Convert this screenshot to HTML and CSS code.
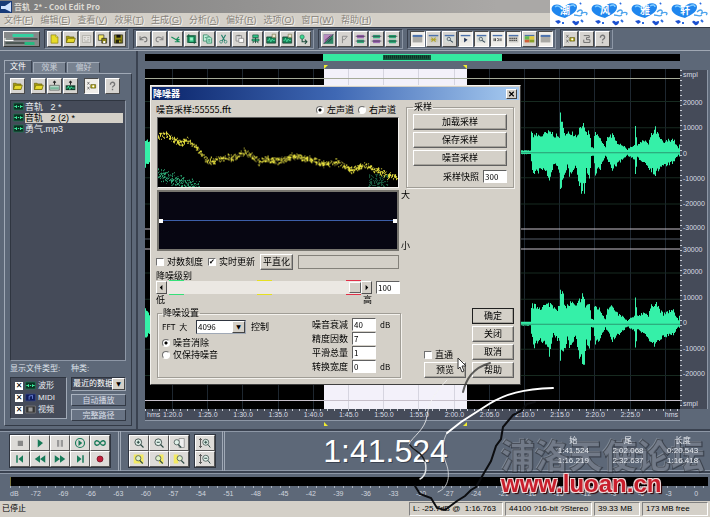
FILE: index.html
```html
<!DOCTYPE html>
<html lang="zh-CN">
<head>
    <meta charset="UTF-8">
    <meta name="viewport" content="width=device-width, initial-scale=1.0">
    <title>音轨 2* - Cool Edit Pro</title>
    <link rel="stylesheet" href="styles.css">
</head>
<body>
    <!-- 图标 -->
    <svg class="icon-defs" aria-hidden="true">
        <symbol id="i-new" viewBox="0 0 16 16"><path d="M3 2h7l3 3v9H3z" fill="#e8dc28" stroke="#8a8210"/><path d="M10 2v3h3" fill="#fff" stroke="#8a8210"/></symbol>
        <symbol id="i-open" viewBox="0 0 16 16"><path d="M2 13V4h4l1 1h6v8z" fill="#a89c10" stroke="#6b6408"/><path d="M2 13l2-6h11l-2 6z" fill="#e6d92c" stroke="#6b6408"/></symbol>
        <symbol id="i-doc" viewBox="0 0 16 16"><path d="M2 3h12v10H2z" fill="#e4e2de" stroke="#a5a39e"/><path d="M4 6h3m2 0h3M4 9h2m3 0h3M5 11h6" stroke="#a5a39e"/></symbol>
        <symbol id="i-saveas" viewBox="0 0 16 16"><path d="M2 2h8v8H2z" fill="#f4e860" stroke="#333"/><path d="M7 7h7v7H7z" fill="#8d8612" stroke="#222"/><path d="M9 11h3v3H9z" fill="#fff"/></symbol>
        <symbol id="i-save" viewBox="0 0 16 16"><path d="M2 2h12v12H2z" fill="#8d8612" stroke="#222"/><path d="M5 2h6v4H5z" fill="#111"/><path d="M4 9h8v5H4z" fill="#26250c"/><path d="M9 10h2v3H9z" fill="#e6d92c"/></symbol>
        <symbol id="i-undo" viewBox="0 0 16 16"><path d="M3 4v5h5M3 9c3-5 10-5 10 0 0 2-2 3-4 3" fill="none" stroke="#777" stroke-width="1.5"/></symbol>
        <symbol id="i-redo" viewBox="0 0 16 16"><path d="M13 4v5H8M13 9C10 4 3 4 3 9c0 2 2 3 4 3" fill="none" stroke="#888" stroke-width="1.5"/></symbol>
        <symbol id="i-split" viewBox="0 0 16 16"><path d="M2 5l7 4h5M13 5L9 9l4 3H7" fill="none" stroke="#178c5a" stroke-width="1.7"/></symbol>
        <symbol id="i-crop" viewBox="0 0 16 16"><path d="M2 3h12v10H2z" fill="#38c486" stroke="#17513a"/><path d="M4 1v12h11M1 4h11v11" fill="none" stroke="#0c5a3a" stroke-width="1.4"/><path d="M6 6h4v4H6z" fill="#9ff0ca"/></symbol>
        <symbol id="i-copy" viewBox="0 0 16 16"><path d="M2 2h6l2 2v7H2z" fill="#c6f0dc" stroke="#1a7a54"/><path d="M7 5h5l2 2v7H7z" fill="#b0e8d0" stroke="#1a7a54"/><path d="M9 9h3M9 11h3M4 6h2" stroke="#1a7a54"/></symbol>
        <symbol id="i-cut" viewBox="0 0 16 16"><path d="M5 2l5 9M11 2L6 11" stroke="#24806a" stroke-width="1.5"/><circle cx="4.500" cy="12" r="2" fill="none" stroke="#24806a"/><circle cx="11" cy="12" r="2" fill="none" stroke="#24806a"/></symbol>
        <symbol id="i-paste" viewBox="0 0 16 16"><path d="M3 3h8v8H3z" fill="#ddd" stroke="#777"/><path d="M7 7h7v6H7z" fill="#fff" stroke="#777"/><path d="M5 2h4v2H5z" fill="#777"/></symbol>
        <symbol id="i-mix" viewBox="0 0 16 16"><path d="M4 2h8v4H4zM3 8h10v3H3z" fill="#2fc485" stroke="#16513a"/><path d="M8 6v8M4 14l2-3m6 3l-2-3" stroke="#16513a" stroke-width="1.300"/></symbol>
        <symbol id="i-wavedoc" viewBox="0 0 16 16"><path d="M1 5h13v9H1z" fill="#158055" stroke="#14382a"/><path d="M2 10h2l1-3 2 5 2-4 1 2h3" fill="none" stroke="#59f0b0"/><path d="M9 1h5v5H9z" fill="#e8e4d0" stroke="#7e7a50"/></symbol>
        <symbol id="i-convert" viewBox="0 0 16 16"><circle cx="6" cy="5" r="3" fill="#3cd890" stroke="#177650"/><path d="M6 8v4h7m-3-3l3 3-3 3" fill="none" stroke="#1b4a3a" stroke-width="1.500"/></symbol>
        <symbol id="i-diag" viewBox="0 0 16 16"><path d="M1 1h14v14H1z" fill="#2d8765"/><path d="M1 1h14L1 15z" fill="#b98abf"/><path d="M1 15L15 1M3 10l8-7M7 13l6-6" stroke="#2b1c38"/></symbol>
        <symbol id="i-flag" viewBox="0 0 16 16"><path d="M5 14V4h7L8 9H5" fill="none" stroke="#888" stroke-width="1.300"/></symbol>
        <symbol id="i-bars-a" viewBox="0 0 16 16"><path d="M3 2h10v5H3z" fill="#9c68b0"/><path d="M3 9h10v5H3z" fill="#30a878"/><path d="M1 4h14M1 11h14" stroke="#322844"/></symbol>
        <symbol id="i-bars-b" viewBox="0 0 16 16"><path d="M3 2h10v5H3z" fill="#30a878"/><path d="M3 9h10v5H3z" fill="#9c68b0"/><path d="M1 4h14M1 11h14" stroke="#322844"/></symbol>
        <symbol id="i-bars-c" viewBox="0 0 16 16"><path d="M3 2h10v5H3zM3 9h10v5H3z" fill="#30a878"/><path d="M1 4h14M1 11h14" stroke="#14382a"/></symbol>
        <symbol id="i-win" viewBox="0 0 16 16"><path d="M1 3h14v10H1z" fill="#a9a9a5"/><path d="M1 2h14v3H1z" fill="#4b72ae"/></symbol>
        <symbol id="i-win-play" viewBox="0 0 16 16"><path d="M1 3h14v10H1z" fill="#e8e8e4"/><path d="M1 2h14v2H1z" fill="#4b72ae"/><path d="M6 6l5 3-5 4z" fill="#235"/></symbol>
        <symbol id="i-win-gear" viewBox="0 0 16 16"><path d="M1 3h14v10H1z" fill="#c9c9c0"/><path d="M1 2h14v2H1z" fill="#4b72ae"/><path d="M5 6l6 6M11 6l-6 6M4 9h8" stroke="#b0a428" stroke-width="1.500"/></symbol>
        <symbol id="i-win-zoom" viewBox="0 0 16 16"><path d="M1 3h14v10H1z" fill="#d5dcd8"/><path d="M1 2h14v2H1z" fill="#4b72ae"/><circle cx="7" cy="8" r="2.500" fill="none" stroke="#345"/><path d="M9 10l4 3" stroke="#345" stroke-width="1.500"/></symbol>
        <symbol id="i-win-time" viewBox="0 0 16 16"><path d="M1 3h14v10H1z" fill="#e8e8e4"/><path d="M1 2h14v2H1z" fill="#4b72ae"/><path d="M3 7v4m2-4v4M8 7v1m0 2v1m2-4v4m3-4v4" stroke="#222" stroke-width="1.200"/></symbol>
        <symbol id="i-win-level" viewBox="0 0 16 16"><path d="M1 3h14v10H1z" fill="#c9c9c5"/><path d="M1 2h14v2H1z" fill="#4b72ae"/><path d="M2 7h12M2 10h12" stroke="#444" stroke-width="2" stroke-dasharray="2 1"/></symbol>
        <symbol id="i-win-color" viewBox="0 0 16 16"><path d="M1 2h14v2H1z" fill="#4b72ae"/><path d="M1 4h7v5H1z" fill="#63b84e"/><path d="M8 4h7v5H8z" fill="#e0c93c"/><path d="M1 9h7v4H1z" fill="#d06038"/><path d="M8 9h7v4H8z" fill="#88a028"/></symbol>
        <symbol id="i-props" viewBox="0 0 16 16"><path d="M2 2l3 4M5 2L2 6M2 9l3 4M5 9l-3 4" stroke="#555"/><path d="M7 6h7v5H7z" fill="#b8ae20" stroke="#5c5610"/><circle cx="10.500" cy="8.500" r="1.500" fill="#fff"/></symbol>
        <symbol id="i-script" viewBox="0 0 16 16"><path d="M4 3h8v3H8v3h5v4H4V9" fill="none" stroke="#666" stroke-width="1.300"/></symbol>
        <symbol id="i-help" viewBox="0 0 16 16"><path d="M5 6c0-5 7-4 6 0 0 2-3 2-3 4m0 2v2" fill="none" stroke="#777" stroke-width="2"/></symbol>
        <symbol id="i-import" viewBox="0 0 16 16"><path d="M1 7h14v7H1z" fill="#b5d8c8" stroke="#555"/><path d="M8 1v5M6 3l2-2 2 2" fill="none" stroke="#222" stroke-width="1.500"/><path d="M2 11h12" stroke="#178c5a"/></symbol>
        <symbol id="i-insert" viewBox="0 0 16 16"><path d="M1 7h14v7H1z" fill="#133c2c"/><path d="M8 1v5M6 3l2-2 2 2" fill="none" stroke="#222" stroke-width="1.500"/><path d="M2 11h2l1-3 2 5 2-4 1 2h4" fill="none" stroke="#36e89a" stroke-width="1.300"/></symbol>
        <symbol id="i-wave" viewBox="0 0 16 12"><path d="M1 1h14v10H1z" fill="#0b3021" stroke="#1f7a55"/><path d="M2 6h3V4v4m2-2h2m2 0V4v4m0-2h3" fill="none" stroke="#3cf0a0" stroke-width="1.500"/></symbol>
        <symbol id="i-midi" viewBox="0 0 16 12"><path d="M1 1h14v10H1z" fill="#0f1c5c" stroke="#3a4a88"/><path d="M6 9V4l5-1v5" fill="none" stroke="#8aa6ff"/></symbol>
        <symbol id="i-video" viewBox="0 0 16 12"><path d="M1 1h14v10H1z" fill="#333" stroke="#888"/><path d="M5 3h6v6H5z" fill="#999"/></symbol>
        <symbol id="i-stop" viewBox="0 0 16 16"><path d="M5 5h7v7H5z" fill="#888"/></symbol>
        <symbol id="i-play" viewBox="0 0 16 16"><path d="M5 3l7 5-7 6z" fill="#177a58"/></symbol>
        <symbol id="i-pause" viewBox="0 0 16 16"><path d="M4 4h3v9H4zM9 4h3v9H9z" fill="#999"/></symbol>
        <symbol id="i-playcircle" viewBox="0 0 16 16"><circle cx="8" cy="8" r="6" fill="none" stroke="#177a58" stroke-width="1.500"/><path d="M6 4l5 4-5 4z" fill="#177a58"/></symbol>
        <symbol id="i-loop" viewBox="0 0 16 16"><path d="M8 8C5 3 1 5 1 8s4 5 7 0 7-3 7 0-4 5-7 0z" fill="none" stroke="#177a58" stroke-width="1.800"/></symbol>
        <symbol id="i-start" viewBox="0 0 16 16"><path d="M3 3h2v10H3zM12 3v10L6 8z" fill="#177a58"/></symbol>
        <symbol id="i-rew" viewBox="0 0 16 16"><path d="M8 3v10L1 8zM15 3v10L8 8z" fill="#177a58"/></symbol>
        <symbol id="i-fwd" viewBox="0 0 16 16"><path d="M1 3v10l7-5zM8 3v10l7-5z" fill="#177a58"/></symbol>
        <symbol id="i-end" viewBox="0 0 16 16"><path d="M11 3h2v10h-2zM4 3v10l6-5z" fill="#177a58"/></symbol>
        <symbol id="i-rec" viewBox="0 0 16 16"><circle cx="8" cy="8" r="4" fill="#c01c38" stroke="#701020"/></symbol>
        <symbol id="i-zin" viewBox="0 0 16 16"><circle cx="7" cy="7" r="4.500" fill="#dff0e8" stroke="#3c4c4a" stroke-width="1.200"/><path d="M5 7h4M7 5v4M10 10l4 4" stroke="#2c4a44" stroke-width="1.500"/></symbol>
        <symbol id="i-zout" viewBox="0 0 16 16"><circle cx="7" cy="7" r="4.500" fill="#dff0e8" stroke="#3c4c4a" stroke-width="1.200"/><path d="M5 7h4M10 10l4 4" stroke="#2c4a44" stroke-width="1.500"/></symbol>
        <symbol id="i-zfull" viewBox="0 0 16 16"><path d="M8 2h7v12H8z" fill="#eee" stroke="#888"/><circle cx="5" cy="7" r="3.500" fill="#dff0e8" stroke="#3c4c4a"/><path d="M7 10l4 4" stroke="#2c4a44" stroke-width="1.500"/></symbol>
        <symbol id="i-zsel" viewBox="0 0 16 16"><path d="M1 2h13v12H1z" fill="#f2ea62"/><circle cx="7" cy="7" r="3.500" fill="#dff0c8" stroke="#3c4c4a"/><path d="M9 10l4 4" stroke="#2c4a44" stroke-width="1.500"/></symbol>
        <symbol id="i-zleft" viewBox="0 0 16 16"><path d="M8 2h6v12H8z" fill="#f2ea62"/><circle cx="7" cy="7" r="3.500" fill="#dff0c8" stroke="#3c4c4a"/><path d="M9 10l4 4" stroke="#2c4a44" stroke-width="1.500"/></symbol>
        <symbol id="i-zright" viewBox="0 0 16 16"><path d="M1 2h6v12H1z" fill="#f2ea62"/><circle cx="9" cy="7" r="3.500" fill="#dff0c8" stroke="#3c4c4a"/><path d="M11 10l4 4" stroke="#2c4a44" stroke-width="1.500"/></symbol>
        <symbol id="i-vin" viewBox="0 0 16 16"><path d="M2 2v12M0 4l2-2 2 2M0 12l2 2 2-2" fill="none" stroke="#333"/><circle cx="9" cy="7" r="4" fill="#dff0e8" stroke="#3c4c4a"/><path d="M7 7h4M9 5v4M12 10l3 4" stroke="#2c4a44" stroke-width="1.300"/></symbol>
        <symbol id="i-vout" viewBox="0 0 16 16"><path d="M2 2v12M0 4l2-2 2 2M0 12l2 2 2-2" fill="none" stroke="#333"/><circle cx="9" cy="7" r="4" fill="#dff0e8" stroke="#3c4c4a"/><path d="M7 7h4M12 10l3 4" stroke="#2c4a44" stroke-width="1.300"/></symbol>
        <symbol id="i-heart" viewBox="0 0 40 26">
            <path d="M15 18C5 16 0 11 2 7c2-4 9-3 12 1 3-6 13-6 13-1 0 5-6 8-12 11z" fill="#1f86ee"/>
            <path d="M5 7c2-2 4-1 6 1M20 6c3-2 5-1 5 1" fill="none" stroke="#7fcbff" stroke-width="1.500"/>
            <path d="M27 12c4-4 7-1 4 2 4-3 8-1 5 1M24 15c3 0 5 2 8 0" fill="none" stroke="#4ba2ec" stroke-width="1.300"/>
            <path d="M5 21l3 3 3-2-2-2zM22 22c2-3 4 0 4 0s3-2 3 0-3 4-4 3z" fill="#1b50d0"/>
            <path d="M12 23h2M31 20l2 2M30 4l1-1" stroke="#2c6ce0" stroke-width="2"/>
        </symbol>
    </svg>

    <header class="title-bar">
        <svg class="app-icon" viewBox="0 0 12 12"><path d="M0 0h12v12H0z" fill="#173a78"/><path d="M1 5h4l6-4v10L5 8H1z" fill="#cfe2ff"/></svg>
        <h1>音轨&nbsp; 2* - Cool Edit Pro</h1>
    </header>

    <nav class="menu-bar">
        <a href="#">文件(<u>F</u>)</a>
        <a href="#">编辑(<u>E</u>)</a>
        <a href="#">查看(<u>V</u>)</a>
        <a href="#">效果(<u>T</u>)</a>
        <a href="#">生成(<u>G</u>)</a>
        <a href="#">分析(<u>A</u>)</a>
        <a href="#">偏好(<u>R</u>)</a>
        <a href="#">选项(<u>O</u>)</a>
        <a href="#">窗口(<u>W</u>)</a>
        <a href="#">帮助(<u>H</u>)</a>
    </nav>

    <div class="banner">
        <span class="heart"><svg><use href="#i-heart"/></svg><b>潮</b></span>
        <span class="heart"><svg><use href="#i-heart"/></svg><b>风</b></span>
        <span class="heart"><svg><use href="#i-heart"/></svg><b>雅</b></span>
        <span class="heart"><svg><use href="#i-heart"/></svg><b>轩</b></span>
    </div>

    <div class="toolbar">
        <button class="view-switch" aria-label="切换视图">
            <svg viewBox="0 0 34 14"><path d="M0 0h34v14H0z" fill="#85898a"/><path d="M8 2h21v3H8z" fill="#35d0a0"/><path d="M0 6h9v3H0z" fill="#fff"/><path d="M20 10h10v3H20z" fill="#27b980"/><path d="M1 7h32M1 11h19" stroke="#14261f"/></svg>
        </button>
        <div class="tool-group">
            <button class="tool" aria-label="新建"><svg><use href="#i-new"/></svg></button>
            <button class="tool" aria-label="打开"><svg><use href="#i-open"/></svg></button>
            <button class="tool" aria-label="文档"><svg><use href="#i-doc"/></svg></button>
            <button class="tool" aria-label="另存为"><svg><use href="#i-saveas"/></svg></button>
            <button class="tool" aria-label="保存"><svg><use href="#i-save"/></svg></button>
        </div>
        <div class="tool-group">
            <button class="tool" aria-label="撤销"><svg><use href="#i-undo"/></svg></button>
            <button class="tool" aria-label="重做"><svg><use href="#i-redo"/></svg></button>
            <button class="tool" aria-label="分割"><svg><use href="#i-split"/></svg></button>
            <button class="tool" aria-label="裁剪"><svg><use href="#i-crop"/></svg></button>
            <button class="tool" aria-label="复制"><svg><use href="#i-copy"/></svg></button>
            <button class="tool" aria-label="剪切"><svg><use href="#i-cut"/></svg></button>
            <button class="tool" aria-label="粘贴"><svg><use href="#i-paste"/></svg></button>
            <button class="tool" aria-label="混合粘贴"><svg><use href="#i-mix"/></svg></button>
            <button class="tool" aria-label="复制到新文件"><svg><use href="#i-wavedoc"/></svg></button>
            <button class="tool" aria-label="插入多轨"><svg><use href="#i-wavedoc"/></svg></button>
            <button class="tool" aria-label="转换"><svg><use href="#i-convert"/></svg></button>
        </div>
        <div class="tool-group">
            <button class="tool" aria-label="频谱"><svg><use href="#i-diag"/></svg></button>
            <button class="tool" aria-label="标记"><svg><use href="#i-flag"/></svg></button>
            <button class="tool" aria-label="左声道"><svg><use href="#i-bars-a"/></svg></button>
            <button class="tool" aria-label="右声道"><svg><use href="#i-bars-b"/></svg></button>
            <button class="tool" aria-label="双声道"><svg><use href="#i-bars-c"/></svg></button>
        </div>
        <div class="tool-group">
            <button class="tool pressed" aria-label="管理器"><svg><use href="#i-win"/></svg></button>
            <button class="tool" aria-label="提示列表"><svg><use href="#i-win-gear"/></svg></button>
            <button class="tool" aria-label="播放列表"><svg><use href="#i-win-zoom"/></svg></button>
            <button class="tool pressed" aria-label="播放控制"><svg><use href="#i-win-play"/></svg></button>
            <button class="tool pressed" aria-label="缩放控制"><svg><use href="#i-win-zoom"/></svg></button>
            <button class="tool pressed" aria-label="时间窗"><svg><use href="#i-win-time"/></svg></button>
            <button class="tool pressed" aria-label="电平表"><svg><use href="#i-win-level"/></svg></button>
            <button class="tool" aria-label="分析"><svg><use href="#i-win-color"/></svg></button>
            <button class="tool pressed" aria-label="状态栏"><svg><use href="#i-win"/></svg></button>
        </div>
        <div class="tool-group">
            <button class="tool" aria-label="设置"><svg><use href="#i-props"/></svg></button>
            <button class="tool" aria-label="脚本"><svg><use href="#i-script"/></svg></button>
            <button class="tool" aria-label="帮助"><svg><use href="#i-help"/></svg></button>
        </div>
    </div>

    <main class="workspace">
        <aside class="organizer">
            <div class="tabs">
                <button class="tab active">文件</button>
                <button class="tab">效果</button>
                <button class="tab">偏好</button>
            </div>
            <div class="tab-page">
                <div class="file-tools">
                    <button class="tool" aria-label="打开文件"><svg><use href="#i-open"/></svg></button>
                    <button class="tool gap" aria-label="关闭文件"><svg><use href="#i-open"/></svg></button>
                    <button class="tool" aria-label="导入"><svg><use href="#i-import"/></svg></button>
                    <button class="tool" aria-label="插入"><svg><use href="#i-insert"/></svg></button>
                    <button class="tool gap pressed" aria-label="选项"><svg><use href="#i-props"/></svg></button>
                    <button class="tool gap" aria-label="帮助"><svg><use href="#i-help"/></svg></button>
                </div>
                <ul class="file-list">
                    <li><svg><use href="#i-wave"/></svg>音轨&nbsp;&nbsp; 2 *</li>
                    <li class="selected"><svg><use href="#i-wave"/></svg><span>音轨&nbsp;&nbsp; 2 (2) *</span></li>
                    <li><svg><use href="#i-wave"/></svg>勇气.mp3</li>
                </ul>
                <div class="file-filter">
                    <div class="filter-types">
                        <div class="filter-label">显示文件类型:</div>
                        <div class="type-box">
                            <label><input type="checkbox" class="x-check" checked><svg><use href="#i-wave"/></svg>波形</label>
                            <label><input type="checkbox" class="x-check" checked><svg><use href="#i-midi"/></svg>MIDI</label>
                            <label><input type="checkbox" class="x-check" checked><svg><use href="#i-video"/></svg>视频</label>
                        </div>
                    </div>
                    <div class="filter-sort">
                        <label class="filter-label" for="sort">种类:</label>
                        <div class="select-wrap">
                            <select id="sort"><option>最近的数据</option></select>
                        </div>
                        <button class="flat-btn">自动播放</button>
                        <button class="flat-btn">完整路径</button>
                    </div>
                </div>
            </div>
        </aside>

        <section class="editor">
            <div class="tracks">
                <svg class="overview" viewBox="0 0 535 7" preserveAspectRatio="none">
                    <path d="M178 0h179v7H178z" fill="#35e8a0"/>
                    <path d="M238 1h48v5h-48z" fill="#15553c"/>
                    <path d="M239 3h46" stroke="#0c3023" stroke-dasharray="1 1" stroke-width="3"/>
                </svg>
                <svg class="markers" viewBox="0 0 535 8" preserveAspectRatio="none"><path d="M179 4h4l-4 4zM322 4h-4l4 4z" fill="#f0ec30"/></svg>
                <svg class="waves" id="waves" viewBox="0 0 535 339" preserveAspectRatio="none"></svg>
                <div class="time-ruler">
                    <span class="unit">hms</span>
                    <span>1:20.0</span><span>1:25.0</span><span>1:30.0</span><span>1:35.0</span><span>1:40.0</span><span>1:45.0</span><span>1:50.0</span><span>1:55.0</span><span>2:00.0</span><span>2:05.0</span><span>2:10.0</span><span>2:15.0</span><span>2:20.0</span><span>2:25.0</span>
                    <span class="unit end">hms</span>
                </div>
                <svg class="markers" viewBox="0 0 535 8" preserveAspectRatio="none"><path d="M179 1v4h4zM322 1v4h-4z" fill="#f0ec30"/></svg>
            </div>
            <div class="level-scale">
                <div class="scale-block top">
                    <span>smpl</span><span>20000</span><span>10000</span><span>0</span><span>-10000</span><span>-20000</span><span>-30000</span>
                </div>
                <div class="scale-block bottom">
                    <span>30000</span><span>20000</span><span>10000</span><span>0</span><span>-10000</span><span>-20000</span><span>smpl</span>
                </div>
            </div>
        </section>
    </main>

    <div class="control-bar">
        <div class="pad transport">
            <button aria-label="停止"><svg><use href="#i-stop"/></svg></button>
            <button aria-label="播放"><svg><use href="#i-play"/></svg></button>
            <button aria-label="暂停"><svg><use href="#i-pause"/></svg></button>
            <button aria-label="播放到结尾"><svg><use href="#i-playcircle"/></svg></button>
            <button aria-label="循环"><svg><use href="#i-loop"/></svg></button>
            <button aria-label="开头"><svg><use href="#i-start"/></svg></button>
            <button aria-label="后退"><svg><use href="#i-rew"/></svg></button>
            <button aria-label="前进"><svg><use href="#i-fwd"/></svg></button>
            <button aria-label="结尾"><svg><use href="#i-end"/></svg></button>
            <button aria-label="录音"><svg><use href="#i-rec"/></svg></button>
        </div>
        <div class="zoom-pads">
            <div class="pad zoom-h">
                <button aria-label="放大"><svg><use href="#i-zin"/></svg></button>
                <button aria-label="缩小"><svg><use href="#i-zout"/></svg></button>
                <button aria-label="全部"><svg><use href="#i-zfull"/></svg></button>
                <button aria-label="放大选区"><svg><use href="#i-zsel"/></svg></button>
                <button aria-label="选区左侧"><svg><use href="#i-zleft"/></svg></button>
                <button aria-label="选区右侧"><svg><use href="#i-zright"/></svg></button>
            </div>
            <div class="pad zoom-v">
                <button aria-label="垂直放大"><svg><use href="#i-vin"/></svg></button>
                <button aria-label="垂直缩小"><svg><use href="#i-vout"/></svg></button>
            </div>
        </div>
        <div class="clock">1:41.524</div>
        <table class="range">
            <tr><th>始</th><th>尾</th><th>长度</th></tr>
            <tr><td>1:41.524</td><td>2:02.068</td><td>0:20.543</td></tr>
            <tr><td>1:16.219</td><td>2:32.637</td><td>1:16.418</td></tr>
        </table>
    </div>

    <div class="meter">
        <div class="meter-bar"></div>
        <div class="meter-scale">
            <span class="unit">dB</span>
            <span>-72</span><span>-69</span><span>-66</span><span>-63</span><span>-60</span><span>-57</span><span>-54</span><span>-51</span><span>-48</span><span>-45</span><span>-42</span><span>-39</span><span>-36</span><span>-33</span><span>-30</span><span>-27</span><span>-24</span><span>-21</span><span>-18</span><span>-15</span><span>-12</span><span>-9</span><span>-6</span><span>-3</span><span>0</span>
        </div>
    </div>

    <footer class="status-bar">
        <span class="state">已停止</span>
        <span class="cell level">L: -25.7dB @&nbsp; 1:16.763</span>
        <span class="cell format">44100 ?16-bit ?Stereo</span>
        <span class="cell size">39.33 MB</span>
        <span class="cell free">173 MB free</span>
    </footer>

    <!-- 降噪器 -->
    <div class="dialog" role="dialog" aria-labelledby="dialogTitle">
        <div class="dialog-title">
            <h2 id="dialogTitle">降噪器</h2>
            <button class="close" aria-label="关闭窗口"><svg viewBox="0 0 8 8"><path d="M1 1l6 6M7 1L1 7" stroke="#000" stroke-width="1.500"/></svg></button>
        </div>
        <div class="dialog-body">
            <div class="dialog-left">
                <div class="profile-row">
                    <span>噪音采样:55555.fft</span>
                    <label><input type="radio" name="channel" checked>左声道</label>
                    <label><input type="radio" name="channel">右声道</label>
                </div>
                <div class="graph-row">
                    <div class="graphs">
                        <canvas id="noise" class="noise-graph" width="241" height="70"></canvas>
                        <div class="curve-graph"><i></i><i></i></div>
                    </div>
                    <div class="graph-labels"><span>大</span><span>小</span></div>
                </div>
                <div class="option-row">
                    <label><input type="checkbox">对数刻度</label>
                    <label><input type="checkbox" checked>实时更新</label>
                    <button class="btn">平直化</button>
                    <div class="readout"></div>
                </div>
                <label class="level-label" for="level">降噪级别</label>
                <div class="slider-row">
                    <div class="slider">
                        <button class="arrow" aria-label="减小"><svg viewBox="0 0 8 8"><path d="M5 1v6L2 4z"/></svg></button>
                        <input type="range" id="level" min="0" max="100" value="100">
                        <button class="arrow" aria-label="增大"><svg viewBox="0 0 8 8"><path d="M3 1v6l3-3z"/></svg></button>
                    </div>
                    <input type="text" class="level-value" value="100" aria-label="降噪级别数值">
                </div>
                <div class="slider-ends"><span>低</span><span>高</span></div>
                <fieldset class="settings">
                    <legend>降噪设置</legend>
                    <div class="mode">
                        <div class="fft-row">
                            <label for="fft">FFT&nbsp; 大</label>
                            <div class="select-wrap light"><select id="fft"><option>4096</option></select></div>
                            <span>控制</span>
                        </div>
                        <label><input type="radio" name="mode" checked>噪音消除</label>
                        <label><input type="radio" name="mode">仅保持噪音</label>
                    </div>
                    <div class="params">
                        <label for="p1">噪音衰减</label><input type="text" id="p1" value="40"><span>dB</span>
                        <label for="p2">精度因数</label><input type="text" id="p2" value="7"><span></span>
                        <label for="p3">平滑总量</label><input type="text" id="p3" value="1"><span></span>
                        <label for="p4">转换宽度</label><input type="text" id="p4" value="0"><span>dB</span>
                    </div>
                </fieldset>
            </div>
            <div class="dialog-right">
                <fieldset class="samples">
                    <legend>采样</legend>
                    <button class="btn">加载采样</button>
                    <button class="btn">保存采样</button>
                    <button class="btn">噪音采样</button>
                    <div class="snap-row"><label for="snap">采样快照</label><input type="text" id="snap" value="300"></div>
                </fieldset>
                <div class="actions">
                    <div class="preview">
                        <label><input type="checkbox">直通</label>
                        <button class="btn">预览</button>
                    </div>
                    <div class="answers">
                        <button class="btn default">确定</button>
                        <button class="btn">关闭</button>
                        <button class="btn">取消</button>
                        <button class="btn">帮助</button>
                    </div>
                </div>
            </div>
        </div>
    </div>

    <!-- 论坛水印 -->
    <svg class="ribbon" viewBox="0 0 180 170" aria-hidden="true">
        <g fill="none" stroke-linecap="round">
            <path d="M85 13C67 18 61 30 58 42" stroke="#3a3a38" stroke-width="2" opacity=".8"/>
            <path d="M42 30C28 45 24 52 22 66S8 86 4 94" stroke="#f4f4f4" opacity=".8"/>
            <path d="M42 83c-5 8-5 20-1 30s4 24-8 29" stroke="#e0e2e4" opacity=".8"/>
            <path d="M148 38C118 39 100 44 84 54L56 72 42 83" stroke="#fff" stroke-width="2"/>
            <path d="M5 95c4 7 12 6 15 17" stroke="#181818" stroke-width="1.500"/>
            <path d="M20 112s4 12-5 17" stroke="#e0e2e4" stroke-width="1.500"/>
            <path d="M130 52l-8 2-6 7-8 4-10 12-2 12-5 7-5 15-7 12-8 14-5 3-6 6-8 5-12 9-8-2-6-10-11-4-5-8" stroke="#0c0d10" stroke-width="2"/>
        </g>
    </svg>
    <div class="watermark">
        <div class="watermark-name">浦洛天使论坛</div>
        <div class="watermark-url">www.luoan.cn</div>
    </div>
    <svg class="cursor" viewBox="0 0 10 16" aria-hidden="true"><path d="M1 1v11l2-2 2 5 2-1-2-5h4z" fill="#fff" stroke="#333"/></svg>

    <script src="script.js"></script>
</body>
</html>
```
FILE: styles.css
```css
* {
    margin: 0;
    padding: 0;
    box-sizing: border-box;
}

body {
    position: relative;
    height: 100vh;
    display: flex;
    flex-direction: column;
    overflow: hidden;
    background: #5d6878;
    color: #000;
    font-family: "Liberation Sans", "Noto Sans CJK SC", sans-serif;
    font-size: 8px;
    line-height: 10px;
}

button, input, select {
    font: inherit;
    color: inherit;
    border-radius: 0;
}

button svg {
    display: block;
    width: 100%;
    height: 100%;
}

.icon-defs {
    position: absolute;
    width: 0;
    height: 0;
}

/* 标题与菜单 */
.title-bar {
    height: 13px;
    display: flex;
    align-items: center;
    gap: 2px;
    background: linear-gradient(90deg, #7c7c7c, #aaa8a6 70%);
}

.app-icon {
    width: 12px;
    height: 12px;
}

.title-bar h1 {
    font-family: "Noto Sans CJK SC", sans-serif;
    font-size: 8px;
    line-height: 12px;
    color: #dedbd4;
}

.menu-bar {
    height: 14px;
    padding-left: 4px;
    display: flex;
    align-items: center;
    gap: 7px;
    background: #d4d0c8;
}

.menu-bar a {
    min-width: 28px;
    font-size: 9px;
    color: #86827a;
    text-decoration: none;
    text-shadow: 1px 1px #f4f2ee;
    white-space: nowrap;
}

.banner {
    position: absolute;
    top: 0;
    right: 0;
    width: 160px;
    height: 27px;
    display: flex;
    background: #fff;
}

.heart {
    position: relative;
    flex: 1;
}

.heart svg {
    width: 100%;
    height: 26px;
}

.heart b {
    position: absolute;
    left: 10px;
    top: 5px;
    font-size: 10px;
    line-height: 12px;
    color: #fff;
}

/* 工具栏 */
.toolbar {
    height: 24px;
    padding: 2px 3px;
    display: flex;
    align-items: center;
    gap: 4px;
    border-top: 1px solid #333a46;
    border-bottom: 1px solid #a0a8b4;
}

.view-switch {
    width: 37px;
    height: 16px;
    border: 1px solid;
    border-color: #f4f4f4 #333 #333 #f4f4f4;
    background: #888;
}

.tool-group {
    display: flex;
    gap: 1px;
    height: 20px;
    padding: 1px 2px;
    border: 1px solid;
    border-color: #363d4a #8d97a6 #8d97a6 #363d4a;
}

.tool {
    width: 15px;
    height: 16px;
    padding: 1px;
    border: 1px solid;
    border-color: #fff #4a4a4a #4a4a4a #fff;
    background: #d6d4d0;
}

.tool.pressed {
    border-color: #4a4a4a #fff #fff #4a4a4a;
    background: #f0eeea;
}

/* 文件管理器 */
.workspace {
    flex: 1;
    min-height: 0;
    display: flex;
    padding-right: 2px;
}

.organizer {
    width: 138px;
    padding: 9px 4px 3px;
    display: flex;
    flex-direction: column;
    border-right: 2px solid #3a4250;
}

.tabs {
    display: flex;
    align-items: flex-end;
    gap: 1px;
}

.tab {
    width: 33px;
    height: 11px;
    border: 1px solid;
    border-color: #a0a9b6 #3a4250 transparent #a0a9b6;
    background: #788290;
    color: #c8ced8;
    line-height: 9px;
}

.tab.active {
    width: 28px;
    height: 13px;
    background: #5d6878;
    color: #fff;
}

.tab-page {
    flex: 1;
    min-height: 0;
    display: flex;
    flex-direction: column;
    padding: 4px 5px;
    border: 1px solid;
    border-color: #a0a9b6 #333a46 #333a46 #a0a9b6;
}

.file-tools {
    display: flex;
    gap: 1px;
    margin-bottom: 6px;
}

.file-tools .gap {
    margin-left: 5px;
}

.file-list {
    flex: 1;
    padding: 0 2px;
    list-style: none;
    border: 1px solid;
    border-color: #2f3540 #8d97a6 #8d97a6 #2f3540;
    background: #454b59;
    color: #e8ebf0;
}

.file-list li {
    height: 11px;
    display: flex;
    align-items: center;
    gap: 1px;
    font-size: 9px;
}

.file-list svg, .type-box svg {
    width: 11px;
    height: 9px;
}

.file-list .selected span {
    flex: 1;
    background: #d4d0c8;
    color: #000;
}

.file-filter {
    display: flex;
    gap: 4px;
    padding-top: 3px;
}

.filter-types {
    width: 57px;
}

.filter-sort {
    flex: 1;
    min-width: 0;
    display: flex;
    flex-direction: column;
    gap: 3px;
}

.filter-label {
    display: block;
    height: 10px;
    color: #dfe4ec;
    white-space: nowrap;
}

.type-box {
    margin-top: 3px;
    padding: 2px 4px;
    border: 1px solid;
    border-color: #2f3540 #a0a9b6 #a0a9b6 #2f3540;
    background: #454b59;
    color: #e8ebf0;
}

.type-box label {
    height: 11px;
    display: flex;
    align-items: center;
    gap: 2px;
    margin-bottom: 1px;
}

.x-check {
    appearance: none;
    width: 8px;
    height: 8px;
    background: #fff;
    line-height: 8px;
    text-align: center;
}

.x-check:checked::before {
    content: "✕";
    display: block;
    font-family: "DejaVu Sans", sans-serif;
    font-weight: bold;
    color: #000;
}

.select-wrap {
    position: relative;
    height: 14px;
    border: 1px solid;
    border-color: #2f3540 #a0a9b6 #a0a9b6 #2f3540;
    background: #454b59;
    color: #fff;
}

.select-wrap select {
    appearance: none;
    display: block;
    width: 100%;
    height: 100%;
    padding-left: 1px;
    border: 0;
    background: transparent;
}

.select-wrap::after {
    content: "▼";
    position: absolute;
    right: 0;
    top: 0;
    bottom: 0;
    width: 11px;
    border: 1px solid;
    border-color: #fff #444 #444 #fff;
    background: #d4d0c8;
    color: #000;
    font-family: "DejaVu Sans", sans-serif;
    font-size: 6px;
    text-align: center;
    pointer-events: none;
}

.flat-btn {
    height: 12px;
    border: 1px solid;
    border-color: #a9b2bf #333a46 #333a46 #a9b2bf;
    background: #687384;
    color: #d8dde6;
    line-height: 9px;
}

/* 波形区 */
.editor {
    flex: 1;
    min-width: 0;
    display: flex;
    padding-left: 7px;
}

.tracks {
    flex: 1;
    min-width: 0;
    display: flex;
    flex-direction: column;
    padding-top: 3px;
}

.tracks svg {
    display: block;
    width: 100%;
}

.overview {
    height: 7px;
    background: #000;
}

.markers {
    height: 8px;
}

.waves {
    flex: 1;
    min-height: 0;
    background: #000;
}

.time-ruler {
    height: 12px;
    display: flex;
    align-items: flex-end;
    padding-left: 2px;
    background: repeating-linear-gradient(90deg, #c8ccd4 0 1px, transparent 1px 7px) 0 0 / 100% 2px no-repeat, #454b59;
    color: #d8dce4;
    font-size: 7px;
    text-align: center;
    border-bottom: 1px solid #8d97a6;
}

.time-ruler span {
    flex: 1;
    min-width: 0;
}

.time-ruler .unit {
    flex: 0 0 8px;
}

.time-ruler .end {
    flex-basis: 32px;
    text-align: right;
    padding-right: 2px;
}

.level-scale {
    width: 28px;
    margin: 19px 0 20px;
    display: flex;
    flex-direction: column;
    border-right: 1px solid #8d97a6;
    background: repeating-linear-gradient(180deg, #c8ccd4 0 1px, transparent 1px 5px) 0 0 / 2px 100% no-repeat, #454b59;
    color: #d8dce4;
    font-size: 7px;
}

.scale-block {
    flex: 1;
    display: grid;
    grid-template-rows: 20fr repeat(5, 25fr) 22fr;
    align-items: center;
    padding-left: 3px;
}

.scale-block.top span:first-child {
    align-self: start;
}

.scale-block.bottom span:last-child {
    align-self: end;
}

/* 播放控制 */
.control-bar {
    height: 44px;
    display: flex;
    align-items: center;
    border-top: 2px solid #3a4250;
    border-bottom: 2px solid #3a4250;
    box-shadow: inset 0 1px #8d97a6, inset 0 -1px #8d97a6;
    padding-left: 9px;
}

.pad {
    display: grid;
    border: 1px solid #2f3540;
}

.pad button {
    width: 20px;
    height: 16px;
    padding: 1px;
    border: 1px solid;
    border-color: #fff #555 #555 #fff;
    background: #dddbd8;
}

.transport {
    grid-template-columns: repeat(5, 20px);
}

.zoom-pads {
    display: flex;
    gap: 4px;
    margin-left: 7px;
    padding: 3px 6px 3px 7px;
    border-left: 3px double #a0a9b6;
    border-right: 3px double #a0a9b6;
}

.zoom-h {
    grid-template-columns: repeat(3, 20px);
}

.clock {
    flex: 1;
    text-align: center;
    color: #fff;
    font-size: 32px;
    line-height: 36px;
    text-shadow: 1px 1px #3a4250;
}

.range {
    position: relative;
    z-index: 1;
    width: 164px;
    border-spacing: 0;
    color: #e8ebf0;
    text-align: center;
}

.range th {
    font-weight: normal;
}

/* 电平表 */
.meter {
    height: 28px;
    padding: 3px 0 0 10px;
    border-top: 1px solid #8d97a6;
}

.meter-bar {
    height: 9px;
    margin-right: 2px;
    background: #000;
    border-left: 1px solid #7b7640;
}

.meter-scale {
    display: flex;
    padding-top: 3px;
    height: 15px;
    background: repeating-linear-gradient(90deg, #aab2be 0 1px, transparent 1px 9px) 0 0 / 100% 2px no-repeat;
    color: #d0d5de;
    font-size: 7px;
    text-align: center;
}

.meter-scale span {
    flex: 1;
    min-width: 0;
}

.meter-scale .unit {
    flex: 0 0 12px;
    text-align: left;
}

/* 状态栏 */
.status-bar {
    height: 16px;
    display: flex;
    align-items: center;
    gap: 2px;
    padding: 1px 2px;
    background: #d4d0c8;
}

.state {
    flex: 1;
}

.cell {
    height: 14px;
    padding: 1px 3px;
    border: 1px solid;
    border-color: #808080 #fff #fff #808080;
    white-space: pre;
}

.level {
    width: 94px;
}

.format {
    width: 87px;
}

.size {
    width: 46px;
}

.free {
    width: 66px;
}

/* 降噪器对话框 */
.dialog {
    position: absolute;
    left: 150px;
    top: 85px;
    width: 371px;
    display: flex;
    flex-direction: column;
    padding: 1px;
    border: 1px solid;
    border-color: #f4f2ee #404040 #404040 #f4f2ee;
    background: #d4d0c8;
    font-family: "Noto Sans CJK SC", sans-serif;
    font-size: 9px;
}

.dialog-title {
    height: 13px;
    display: flex;
    align-items: center;
    justify-content: space-between;
    padding: 0 2px 0 1px;
    background: linear-gradient(90deg, #0a246a, #3f68b4 50%, #a6caf0);
}

.dialog-title h2 {
    font-size: 9px;
    line-height: 12px;
    color: #fff;
}

.close {
    width: 11px;
    height: 10px;
    padding: 1px;
    border: 1px solid;
    border-color: #fff #404040 #404040 #fff;
    background: #d4d0c8;
}

.dialog-body {
    display: flex;
    gap: 5px;
    padding: 2px 4px 5px 4px;
}

.dialog-left {
    flex: 1;
    min-width: 0;
    display: flex;
    flex-direction: column;
}

.dialog label {
    display: flex;
    align-items: center;
    white-space: nowrap;
}

.profile-row, .option-row, .slider-row, .fft-row {
    display: flex;
    align-items: center;
}

.profile-row {
    height: 15px;
    gap: 4px;
    padding-right: 5px;
}

.profile-row span {
    flex: 1;
}

input[type="radio"],
.dialog input[type="checkbox"] {
    appearance: none;
    width: 8px;
    height: 8px;
    margin-right: 3px;
    border: 1px solid;
    border-color: #707070 #fff #fff #707070;
    background: #fff;
}

input[type="radio"] {
    border-radius: 50%;
}

input[type="radio"]:checked {
    background: radial-gradient(circle, #000 0 1px, #fff 2px);
}

.dialog input[type="checkbox"]:checked::before {
    content: "✔";
    display: block;
    font-family: "DejaVu Sans", sans-serif;
    font-size: 7px;
    line-height: 6px;
}

.graph-row {
    display: flex;
    gap: 2px;
    padding-left: 1px;
}

.graphs {
    flex: 1;
    min-width: 0;
    display: flex;
    flex-direction: column;
    gap: 2px;
}

.noise-graph {
    width: 100%;
    height: 71px;
    border: 1px solid;
    border-color: #606060 #f4f2ee #f4f2ee #606060;
    background: #000;
}

.curve-graph {
    height: 61px;
    display: flex;
    align-items: center;
    justify-content: space-between;
    border: 2px solid #77756f;
    background: linear-gradient(#3c5ea8, #3c5ea8) center / 100% 1px no-repeat, #070612;
}

.curve-graph i {
    width: 4px;
    height: 4px;
    background: #fff;
}

/* 标签伸到右侧空白处 */
.graph-labels {
    width: 9px;
    margin-right: -9px;
    padding-top: 73px;
    display: flex;
    flex-direction: column;
    justify-content: space-between;
}

.option-row {
    height: 18px;
    margin-top: 2px;
    padding-right: 2px;
    gap: 5px;
}

.btn {
    height: 16px;
    padding: 0 2px;
    border: 1px solid;
    border-color: #fff #606060 #606060 #fff;
    box-shadow: inset -1px -1px #a5a29b;
    background: #d4d0c8;
    white-space: nowrap;
}

.readout {
    flex: 1;
    height: 14px;
    border: 1px solid #84817a;
}

.dialog .level-label {
    height: 9px;
}

.slider-row {
    gap: 4px;
}

.slider {
    width: 216px;
    height: 15px;
    display: flex;
    align-items: center;
}

.arrow {
    width: 11px;
    height: 13px;
    padding: 1px;
    border: 1px solid;
    border-color: #fff #505050 #505050 #fff;
    background: #d4d0c8;
}

.slider input {
    appearance: none;
    flex: 1;
    min-width: 0;
    height: 15px;
    background:
        linear-gradient(#35e078, #35e078) 2px 0 / 15px 1px no-repeat,
        linear-gradient(#35e078, #35e078) 2px 100% / 15px 1px no-repeat,
        linear-gradient(#e6e020, #e6e020) 50% 0 / 15px 1px no-repeat,
        linear-gradient(#e6e020, #e6e020) 50% 100% / 15px 1px no-repeat,
        linear-gradient(#e03048, #e03048) 100% 0 / 15px 1px no-repeat,
        linear-gradient(#e03048, #e03048) 100% 100% / 15px 1px no-repeat,
        linear-gradient(#ebe8e3, #ebe8e3) 0 1px / 100% 13px no-repeat;
}

.slider input::-webkit-slider-thumb {
    appearance: none;
    width: 12px;
    height: 11px;
    border: 1px solid;
    border-color: #fff #606060 #606060 #fff;
    background: #d4d0c8;
}

.dialog input[type="text"] {
    width: 24px;
    height: 13px;
    padding: 0 1px;
    border: 1px solid;
    border-color: #606060 #fff #fff #606060;
    background: #fff;
    font-size: 8px;
}

.slider-ends {
    width: 216px;
    height: 10px;
    display: flex;
    justify-content: space-between;
}

.settings {
    flex: 1;
    min-height: 0;
    margin: 3px 0 0 1px;
    padding: 0 8px 4px 4px;
    display: flex;
    justify-content: space-between;
    border: 1px solid #a09d96;
    box-shadow: 1px 1px #f4f2ee, inset 1px 1px #f4f2ee;
}

legend {
    padding: 0 1px;
}

.mode {
    display: flex;
    flex-direction: column;
    gap: 2px;
}

.fft-row {
    gap: 5px;
    margin: 2px 0;
}

.dialog .fft-row label {
    width: 29px;
    font-size: 8px;
}

.select-wrap.light {
    width: 50px;
    background: #fff;
    color: #000;
    font-size: 8px;
}

.params {
    display: grid;
    grid-template-columns: 36px 24px 12px;
    align-items: center;
    align-content: start;
    gap: 1px 4px;
}

.params span {
    font-size: 8px;
}

.dialog-right {
    width: 108px;
    margin-right: 1px;
    display: flex;
    flex-direction: column;
    justify-content: space-between;
}

.samples {
    display: flex;
    flex-direction: column;
    gap: 2px;
    padding: 2px 6px 4px;
    border: 1px solid #a09d96;
    box-shadow: 1px 1px #f4f2ee, inset 1px 1px #f4f2ee;
}

.samples .btn, .snap-row, .answers .btn, .preview .btn {
    width: 100%;
}

.snap-row {
    display: flex;
    justify-content: flex-end;
    align-items: center;
    gap: 4px;
    margin-top: 2px;
}

.actions {
    display: flex;
    align-items: flex-end;
    justify-content: flex-end;
    gap: 6px;
}

.preview, .answers {
    width: 42px;
    display: flex;
    flex-direction: column;
    gap: 2px;
}

.btn.default {
    outline: 1px solid #202020;
    outline-offset: -1px;
}

/* 水印与光标 */
.ribbon {
    position: absolute;
    left: 405px;
    top: 350px;
    width: 180px;
    height: 170px;
    pointer-events: none;
}

.watermark {
    position: absolute;
    right: 4px;
    bottom: 22px;
    width: 205px;
    pointer-events: none;
}

.watermark-name {
    font-family: "Noto Sans CJK SC", sans-serif;
    font-size: 34px;
    font-weight: 900;
    line-height: 36px;
    white-space: nowrap;
    color: rgba(90, 98, 110, 0.4);
    -webkit-text-stroke: 1px rgba(25, 28, 34, 0.5);
    text-shadow: -1px -1px rgba(220, 225, 232, 0.3);
}

.watermark-url {
    font-size: 24px;
    font-weight: bold;
    line-height: 22px;
    color: #c81e2c;
    text-shadow: -1px -1px #f0d8d8, 1px -1px #f0d8d8, -1px 1px #f0d8d8, 1px 1px #f0d8d8, 2px 2px 1px #300;
}

.cursor {
    position: absolute;
    left: 457px;
    top: 357px;
    width: 10px;
    height: 16px;
    pointer-events: none;
}
```
FILE: script.js
```js
var seed = 7;
function rand() {
    seed = (seed * 16807) % 2147483647;
    return seed / 2147483647;
}

// 在关键点之间线性插值
function interpolate(points, x) {
    for (var i = 1; i < points.length; i++) {
        if (x <= points[i][0]) {
            var a = points[i - 1], b = points[i];
            return a[1] + (b[1] - a[1]) * (x - a[0]) / (b[0] - a[0]);
        }
    }
    return points[points.length - 1][1];
}

var up = [[375, 2], [385, 2], [386, 20], [395, 18], [405, 22], [412, 17], [414, 18], [415, 39], [416, 30], [418, 32], [420, 18], [426, 23], [431, 18], [435, 28], [437, 33], [440, 20], [444, 22], [446, 6], [448, 4], [449, 20], [454, 16], [460, 5], [462, 18], [467, 19], [470, 12], [477, 8], [482, 3], [485, 6], [489, 8], [490, 25], [492, 9], [500, 13], [503, 8], [505, 17], [510, 25], [514, 16], [518, 10], [524, 14], [528, 14], [531, 8], [533, 4], [535, 14]];
var down = [[375, 2], [385, 2], [388, 25], [395, 19], [401, 20], [404, 34], [408, 12], [414, 20], [415, 36], [419, 30], [422, 15], [424, 24], [430, 14], [435, 40], [439, 41], [441, 18], [444, 30], [446, 4], [448, 4], [450, 22], [455, 17], [460, 4], [467, 18], [473, 12], [482, 3], [489, 8], [490, 28], [492, 6], [500, 12], [505, 18], [510, 24], [515, 16], [521, 14], [528, 11], [533, 3], [535, 6]];

function wavePath(zero) {
    var d = '';
    for (var x = 0; x < 535; x++) {
        if (x >= 8 && x < 375) continue;
        var u = x < 8 ? 15 - x : interpolate(up, x);
        var l = x < 8 ? 15 - x : interpolate(down, x);
        u *= 0.75 + rand() * 0.3;
        l *= 0.75 + rand() * 0.3;
        d += 'M' + (x + 0.5) + ' ' + (zero - u).toFixed(1) + 'V' + (zero + l).toFixed(1);
    }
    return d;
}

function line(d, color) {
    return '<path d="' + d + '" stroke="' + color + '" fill="none"/>';
}

function drawWaves() {
    var html = '<rect x="179" width="143" height="339" fill="#f3f1fa"/>';
    for (var x = 27; x < 535; x += 35.2) {
        html += line('M' + Math.round(x) + '.5 0V339', x > 179 && x < 322 ? '#d6d5e0' : '#1e2730');
    }
    [32, 58, 108, 134, 203, 229, 279, 305].forEach(function (y) {
        html += line('M0 ' + y + '.5H179M322 ' + y + '.5H535', '#172a20');
    });
    [83, 254].forEach(function (y) {
        html += line(wavePath(y), '#35f0a8');
        html += line('M375 ' + y + '.5H535', '#2a9a72');
    });
    html += line('M0 9.5H535', '#a5aa98');
    html += line('M0 159.5H535M0 179.5H535M0 330.5H535', '#c6bfca');
    html += line('M0 169.5H535', '#555d68');
    document.getElementById('waves').innerHTML = html;
}

function drawNoise() {
    var ctx = document.getElementById('noise').getContext('2d');
    var curve = [[0, 19], [8, 16], [16, 22], [24, 26], [30, 23], [40, 31], [48, 43], [56, 44], [66, 40], [76, 41], [87, 34], [95, 39], [101, 45], [108, 42], [120, 44], [135, 39], [148, 41], [168, 47], [180, 45], [195, 53], [208, 48], [221, 54], [231, 59], [241, 60]];
    for (var i = 0; i < 1300; i++) {
        var x = rand() * 241;
        var y = interpolate(curve, x) + (rand() + rand() - 1) * 4;
        ctx.fillStyle = rand() < 0.75 ? '#e2dc3c' : '#77702c';
        ctx.fillRect(Math.floor(x), Math.floor(y), 1, 1);
    }
    for (i = 0; i < 320; i++) {
        x = rand() * 42;
        y = 49 + x * 0.35 + (rand() + rand()) * 8;
        ctx.fillStyle = rand() < 0.5 ? '#2fae78' : '#175a40';
        ctx.fillRect(Math.floor(x), Math.floor(y), 1, 1);
    }
    for (i = 0; i < 110; i++) {
        ctx.fillStyle = '#1b5c40';
        ctx.fillRect(Math.floor(211 + rand() * 20), Math.floor(57 + rand() * 13), 1, 1);
    }
}

drawWaves();
drawNoise();
```
